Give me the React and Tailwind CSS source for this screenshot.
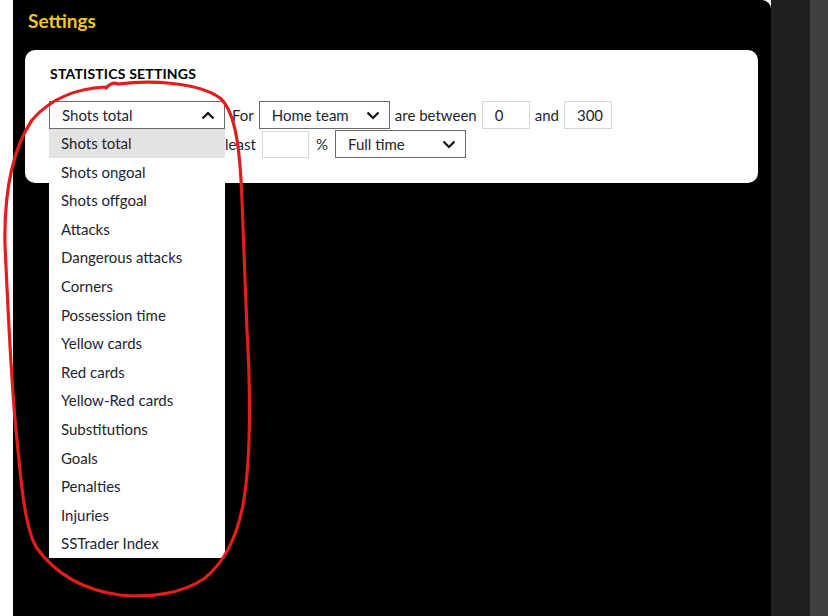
import React from 'react'

const options = [
  'Shots total',
  'Shots ongoal',
  'Shots offgoal',
  'Attacks',
  'Dangerous attacks',
  'Corners',
  'Possession time',
  'Yellow cards',
  'Red cards',
  'Yellow-Red cards',
  'Substitutions',
  'Goals',
  'Penalties',
  'Injuries',
  'SSTrader Index',
]

function Chevron({ up }) {
  return (
    <svg width="14" height="9" viewBox="0 0 14 9" className="shrink-0">
      <polyline
        points={up ? '1.5,7.5 7,2 12.5,7.5' : '1.5,1.5 7,7 12.5,1.5'}
        fill="none"
        stroke="#111"
        strokeWidth="2.2"
      />
    </svg>
  )
}

function FakeSelect({ value, width, up }) {
  return (
    <div
      className={`flex items-center justify-between h-[28px] pl-[12px] pr-[9px] border border-[#6b6b6b] bg-white ${width}`}
    >
      <span>{value}</span>
      <Chevron up={up} />
    </div>
  )
}

function NumberBox({ value }) {
  return (
    <div className="flex items-center h-[28px] w-[48px] pl-[12px] border border-[#d4d7dc] bg-white">
      {value}
    </div>
  )
}

export default function App() {
  return (
    <div
      className="relative flex h-[616px] w-[828px] overflow-hidden bg-white text-[15px] text-[#1e2430]"
      style={{ fontFamily: 'Lato, "Noto Sans", sans-serif' }}
    >
      <div className="w-[13px] shrink-0 bg-white" />

      <div className="w-[758px] shrink-0 bg-black rounded-tr-[9px] pl-[12px]">
        <h1 className="pl-[3px] pt-[9px] text-[19px] font-bold leading-[24px] text-[#f4c51f]">
          Settings
        </h1>

        <div className="mt-[17px] w-[733px] h-[133px] rounded-[10px] bg-white pl-[25px] pt-[15px]">
          <h2 className="text-[14px] font-bold leading-[18px] tracking-[0.2px] text-black">
            STATISTICS SETTINGS
          </h2>

          <div className="relative mt-[18px] ml-[-1px]">
            <div className="flex items-center gap-[5px]">
              <FakeSelect value="Shots total" width="w-[176px]" up />
              <span className="ml-[2px]">For</span>
              <FakeSelect value="Home team" width="w-[131px]" />
              <span>are between</span>
              <NumberBox value="0" />
              <span>and</span>
              <NumberBox value="300" />
            </div>

            <div className="flex items-center mt-[1px]">
              <span className="pl-[176px] w-[213px]">least</span>
              <div className="h-[27px] w-[47px] border border-[#d4d7dc]" />
              <span className="ml-[7px]">%</span>
              <div className="ml-[7px]">
                <FakeSelect value="Full time" width="w-[131px] h-[27px]" />
              </div>
            </div>

            <ul className="absolute left-0 top-[28px] w-[176px] bg-white">
              {options.map((o, i) => (
                <li
                  key={o}
                  className={`flex items-center h-[28.6px] pl-[12px] ${i === 0 ? 'bg-[#e3e3e3]' : ''}`}
                >
                  {o}
                </li>
              ))}
            </ul>
          </div>
        </div>
      </div>

      <div className="w-[39px] shrink-0 bg-[#1f1f1f]" />
      <div className="flex-1 bg-[#404040]" />

      <svg
        className="absolute left-0 top-0 pointer-events-none"
        width="828"
        height="616"
        viewBox="0 0 828 616"
      >
        <path
          d="M106,88 C110,84 114,82 118,84 C150,80 198,82 220,98 C236,112 240,150 242,200 L247,330 C251,400 250,465 243,505 C236,540 224,562 205,578 C182,594 150,598 120,595 C90,591 58,578 36,547 C24,525 21,480 16,430 C11,380 8,310 5,245 C4,195 12,150 32,120 C52,97 80,88 106,87"
          fill="none"
          stroke="#e11d1d"
          strokeWidth="3.2"
          strokeLinecap="round"
        />
      </svg>
    </div>
  )
}
